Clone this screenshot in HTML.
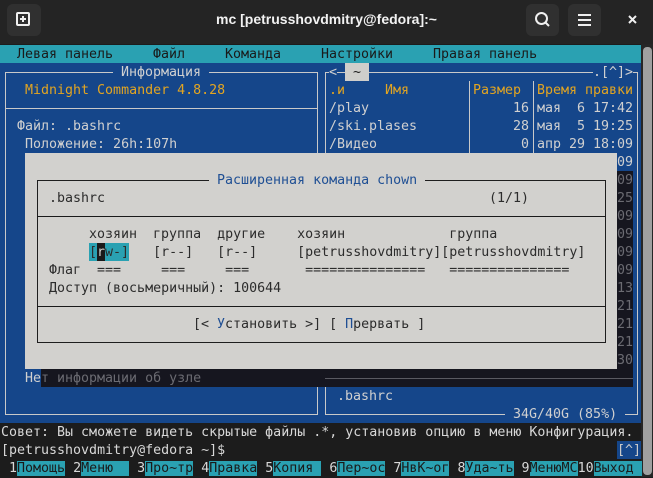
<!DOCTYPE html>
<html><head><meta charset="utf-8"><style>
*{margin:0;padding:0;box-sizing:border-box}
body{width:653px;height:477px;background:#1c1c1c;position:relative;overflow:hidden;font-family:"DejaVu Sans Mono","Liberation Mono",monospace}
.r{position:absolute}
.t{position:absolute;white-space:pre;font-size:13.3px;line-height:18px;height:18px;color:#d0d0d0;padding-top:1px}
.y{color:#e3a521}
.k{color:#1a1a1a}
.d{color:#2c2c2c}
.h{color:#1f4f94}
.s{color:#6b6b72}
.ln{position:absolute;background:#c9c9c9}
.dl{position:absolute;background:#1a1a1a}
</style></head><body>
<div class="r" style="left:0;top:0;width:653px;height:44px;background:#242424"></div>
<div class="r" style="left:7px;top:4px;width:34px;height:32px;background:#303030;border-radius:6px"></div>
<div class="r" style="left:16px;top:12px;width:14px;height:14px;border:2px solid #f0f0f0;border-radius:2px"></div>
<div class="r" style="left:20px;top:18px;width:6px;height:2px;background:#f0f0f0"></div>
<div class="r" style="left:22px;top:16px;width:2px;height:6px;background:#f0f0f0"></div>
<div class="r" style="left:0;top:11px;width:653px;text-align:center;color:#f2f2f2;font:bold 14px 'Liberation Sans',sans-serif">mc [petrusshovdmitry@fedora]:~</div>
<div class="r" style="left:526px;top:4px;width:33px;height:32px;background:#303030;border-radius:6px"></div>
<svg class="r" style="left:526px;top:4px" width="33" height="32"><circle cx="15.5" cy="14.5" r="5.5" fill="none" stroke="#f0f0f0" stroke-width="2"/><path d="M19.5 18.5L23 22" stroke="#f0f0f0" stroke-width="2"/></svg>
<div class="r" style="left:568px;top:4px;width:33px;height:32px;background:#303030;border-radius:6px"></div>
<svg class="r" style="left:568px;top:4px" width="33" height="32"><path d="M10 11h13M10 16h13M10 21h13" stroke="#f0f0f0" stroke-width="2"/></svg>
<svg class="r" style="left:626px;top:13px" width="14" height="14"><path d="M3 3L10 10M10 3L3 10" stroke="#f0f0f0" stroke-width="2"/></svg>
<div class="r" style="left:641px;top:44px;width:12px;height:433px;background:#262626"></div>
<div class="r" style="left:643px;top:47px;width:9px;height:428px;background:#a0a0a0;border-radius:4px"></div>
<div class="r" style="left:0;top:45px;width:641px;height:18px;background:#2aa1b2"></div>
<div class="t k" style="left:17px;top:45px">Левая панель</div>
<div class="t k" style="left:153px;top:45px">Файл</div>
<div class="t k" style="left:225px;top:45px">Команда</div>
<div class="t k" style="left:321px;top:45px">Настройки</div>
<div class="t k" style="left:433px;top:45px">Правая панель</div>
<div class="r" style="left:0;top:63px;width:641px;height:360px;background:#15468a"></div>
<div class="r" style="left:5px;top:72px;width:313px;height:343px;border:1px solid #c9c9c9"></div>
<div class="ln" style="left:5px;top:108px;width:313px;height:1px"></div>
<div class="t" style="left:113px;top:63px;background:#15468a"> Информация </div>
<div class="t y" style="left:25px;top:81px">Midnight Commander 4.8.28</div>
<div class="t" style="left:17px;top:117px">Файл: .bashrc</div>
<div class="t" style="left:25px;top:135px">Положение: 26h:107h</div>
<div class="t" style="left:25px;top:369px">Не</div>
<div class="r" style="left:325px;top:72px;width:313px;height:343px;border:1px solid #c9c9c9"></div>
<div class="ln" style="left:469px;top:81px;width:1px;height:288px"></div>
<div class="ln" style="left:533px;top:81px;width:1px;height:288px"></div>
<div class="t" style="left:329px;top:63px;background:#15468a">&lt;</div>
<div class="t k" style="left:345px;top:63px;background:#cfcecb"> ~ </div>
<div class="t" style="left:593px;top:63px;background:#15468a">.[^]&gt;</div>
<div class="t y" style="left:329px;top:81px">.и     Имя</div>
<div class="t y" style="left:473px;top:81px">Размер</div>
<div class="t y" style="left:537px;top:81px">Время правки</div>
<div class="t" style="left:329px;top:99px">/play</div>
<div class="t" style="left:329px;top:117px">/ski.plases</div>
<div class="t" style="left:329px;top:135px">/Видео</div>
<div class="t" style="left:473px;top:99px">     16</div>
<div class="t" style="left:473px;top:117px">     28</div>
<div class="t" style="left:473px;top:135px">      0</div>
<div class="t" style="left:537px;top:99px">мая  6 17:42</div>
<div class="t" style="left:537px;top:117px">мая  5 19:25</div>
<div class="t" style="left:537px;top:135px">апр 29 18:09</div>
<div class="t" style="left:617px;top:153px">09</div>
<div class="t" style="left:337px;top:387px">.bashrc</div>
<div class="t" style="left:505px;top:405px;background:#15468a"> 34G/40G (85%) </div>
<div class="r" style="left:617px;top:171px;width:16px;height:216px;background:#16161f"></div>
<div class="r" style="left:41px;top:369px;width:592px;height:18px;background:#16161f"></div>
<div class="r" style="left:325px;top:378px;width:308px;height:1px;background:#5a5a62"></div>
<div class="t s" style="left:617px;top:171px;height:auto">09<br>25<br>09<br>09<br>09<br>09<br>13<br>21<br>21<br>21<br>30</div>
<div class="t s" style="left:41px;top:369px">т информации об узле</div>
<div class="r" style="left:25px;top:153px;width:592px;height:216px;background:#d2d1ce"></div>
<div class="r" style="left:37px;top:180px;width:569px;height:163px;border:1px solid #1e1e1e"></div>
<div class="dl" style="left:37px;top:216px;width:569px;height:1px"></div>
<div class="dl" style="left:37px;top:306px;width:569px;height:1px"></div>
<div class="t h" style="left:209px;top:171px;background:#d2d1ce"> Расширенная команда chown </div>
<div class="t d" style="left:49px;top:189px">.bashrc</div>
<div class="t d" style="left:489px;top:189px">(1/1)</div>
<div class="t d" style="left:89px;top:225px">хозяин  группа  другие    хозяин             группа</div>
<div class="r" style="left:89px;top:243px;width:40px;height:18px;background:#2aa1b2"></div>
<div class="r" style="left:97px;top:243px;width:8px;height:18px;background:#1a1a1a"></div>
<div class="t d" style="left:89px;top:243px">[<span style="color:#d2d1ce">r</span>w-]   [r--]   [r--]     [petrusshovdmitry][petrusshovdmitry]</div>
<div class="t d" style="left:49px;top:261px">Флаг  ===     ===     ===       ===============   ===============</div>
<div class="t d" style="left:49px;top:279px">Доступ (восьмеричный): 100644</div>
<div class="t d" style="left:193px;top:315px">[&lt; <span class="h">У</span>становить &gt;] [ <span class="h">П</span>рервать ]</div>
<div class="t" style="left:1px;top:423px;color:#d8d8d8">Совет: Вы сможете видеть скрытые файлы .*, установив опцию в меню Конфигурация.</div>
<div class="t" style="left:1px;top:441px;color:#d8d8d8">[petrusshovdmitry@fedora ~]$</div>
<div class="t" style="left:617px;top:441px;width:24px;background:#15468a;color:#c9c9c9">[^]</div>
<div class="r" style="left:0;top:459px;width:641px;height:18px;background:#1c1c1c"></div>
<div class="t" style="left:1px;top:459px;color:#d8d8d8"> 1<span class="k" style="background:#2aa1b2">Помощь</span> 2<span class="k" style="background:#2aa1b2">Меню  </span> 3<span class="k" style="background:#2aa1b2">Про~тр</span> 4<span class="k" style="background:#2aa1b2">Правка</span> 5<span class="k" style="background:#2aa1b2">Копия </span> 6<span class="k" style="background:#2aa1b2">Пер~ос</span> 7<span class="k" style="background:#2aa1b2">НвК~ог</span> 8<span class="k" style="background:#2aa1b2">Уда~ть</span> 9<span class="k" style="background:#2aa1b2">МенюМС</span>10<span class="k" style="background:#2aa1b2">Выход </span></div>
</body></html>
